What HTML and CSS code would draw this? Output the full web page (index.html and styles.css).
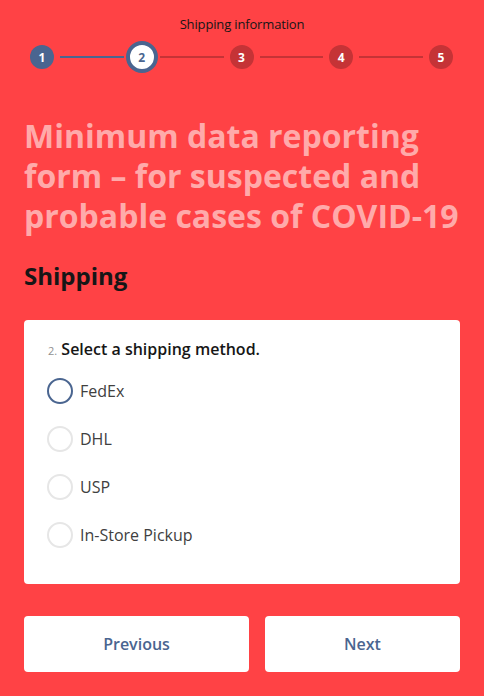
FILE: index.html
```html
<!DOCTYPE html>
<html lang="en">
<head>
<meta charset="utf-8">
<title>Shipping</title>
<link rel="stylesheet" href="styles.css">
</head>
<body>
<div class="page">
  <div class="progress">
    <div class="progress-title">Shipping information</div>
    <div class="steps">
      <div class="step done">1</div>
      <div class="line done"></div>
      <div class="step current"><span>2</span></div>
      <div class="line"></div>
      <div class="step">3</div>
      <div class="line"></div>
      <div class="step">4</div>
      <div class="line"></div>
      <div class="step">5</div>
    </div>
  </div>
  <h1 class="title">Minimum data reporting form – for suspected and probable cases of COVID-19</h1>
  <h2 class="page-title">Shipping</h2>
  <div class="card">
    <div class="question"><span class="qnum">2.</span> Select a shipping method.</div>
    <div class="options">
      <label class="option"><span class="radio checked"></span><span class="label">FedEx</span></label>
      <label class="option"><span class="radio"></span><span class="label">DHL</span></label>
      <label class="option"><span class="radio"></span><span class="label">USP</span></label>
      <label class="option"><span class="radio"></span><span class="label">In-Store Pickup</span></label>
    </div>
  </div>
  <div class="nav">
    <button class="btn">Previous</button>
    <button class="btn">Next</button>
  </div>
</div>
</body>
</html>
```

FILE: styles.css
```css
html, body {
  margin: 0;
  padding: 0;
  background: #ff4245;
}
body {
  font-family: "Open Sans", "Liberation Sans", sans-serif;
  color: #161616;
}
.page {
  padding: 0 24px;
}
.progress {
  padding-top: 14px;
}
.progress-title {
  text-align: center;
  font-size: 13px;
  line-height: 20px;
  color: #161616;
  letter-spacing: -0.15px;
}
.steps {
  display: flex;
  align-items: center;
  margin: 11px 7px 0 6px;
  height: 24px;
}
.step {
  flex: none;
  width: 24px;
  height: 24px;
  border-radius: 50%;
  background: #c53336;
  color: #fff;
  font-size: 12px;
  font-weight: 700;
  display: flex;
  align-items: center;
  justify-content: center;
}
.step.done {
  background: #4a6590;
}
.step.current {
  background: transparent;
  position: relative;
}
.step.current span {
  position: absolute;
  left: -4px;
  top: -4px;
  width: 24px;
  height: 24px;
  border: 4px solid #4a6590;
  background: #fff;
  color: #4a6590;
  border-radius: 50%;
  display: flex;
  align-items: center;
  justify-content: center;
}
.line {
  flex: 1;
  height: 2px;
  margin: 0 6px;
  background: #c53336;
}
.line.done {
  background: #4a6590;
}
.title {
  margin: 47px 0 0;
  font-size: 32px;
  line-height: 40px;
  font-weight: 700;
  color: #ffaaaa;
}
.page-title {
  margin: 23px 0 0;
  font-size: 24px;
  line-height: 34px;
  font-weight: 700;
  color: #161616;
}
.card {
  margin-top: 27px;
  background: #fff;
  border-radius: 4px;
  padding: 17px 24px 25px;
}
.question {
  font-size: 16px;
  font-weight: 600;
  line-height: 24px;
  color: #161616;
}
.qnum {
  font-size: 11px;
  font-weight: 400;
  color: #909090;
}
.options {
  display: flex;
  flex-direction: column;
  margin-top: 4px;
}
.option {
  display: flex;
  align-items: center;
  height: 48px;
}
.radio {
  flex: none;
  width: 22px;
  height: 22px;
  border: 2px solid #e6e6e6;
  border-radius: 50%;
  margin-left: -1px;
}
.radio.checked {
  border-color: #4a6590;
}
.label {
  margin-left: 7px;
  font-size: 16px;
  color: #404040;
}
.nav {
  display: grid;
  grid-template-columns: 225fr 195fr;
  gap: 16px;
  margin-top: 32px;
}
.btn {
  height: 56px;
  border: none;
  border-radius: 4px;
  background: #fff;
  font-family: "Open Sans", "Liberation Sans", sans-serif;
  font-size: 16px;
  font-weight: 600;
  color: #4a6590;
}
```
